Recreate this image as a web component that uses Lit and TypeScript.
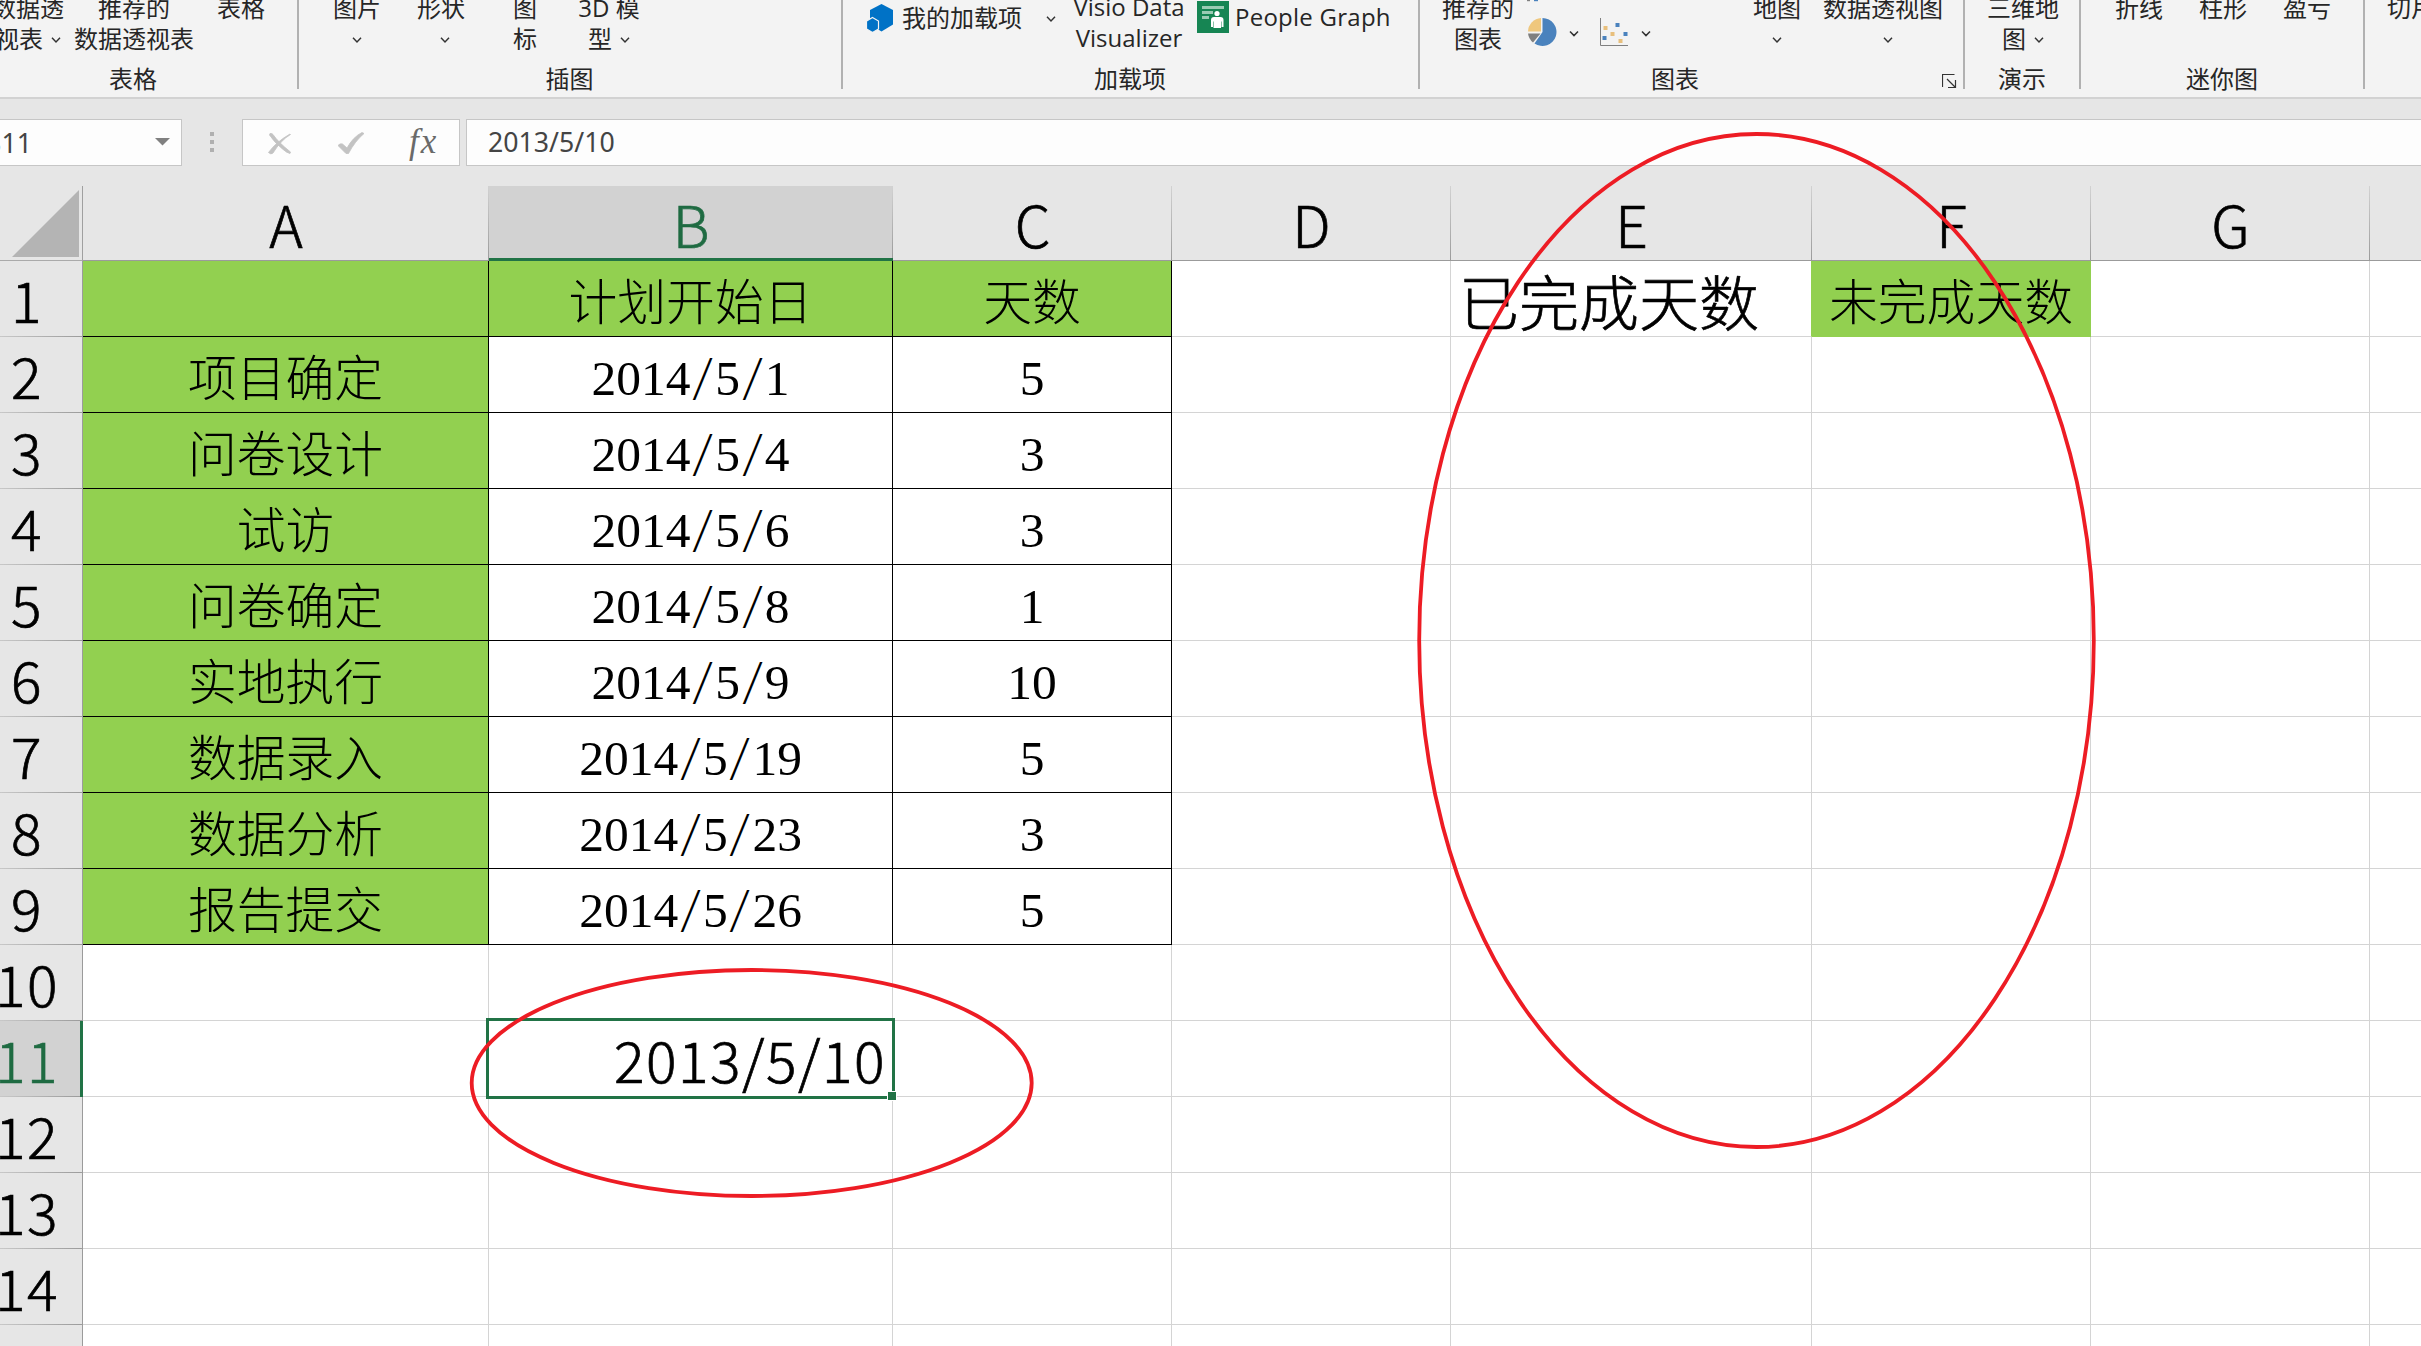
import { LitElement, html, css, svg } from "lit";
import { customElement } from "lit/decorators.js";
import { classMap } from "lit/directives/class-map.js";

const chevron = html`<svg class="chev" width="10" height="6" viewBox="0 0 10 6">
  <path d="M1 .8 5 4.9 9 .8" fill="none" stroke="#333" stroke-width="1.5" />
</svg>`;

@customElement("excel-ribbon")
class ExcelRibbon extends LitElement {
  static styles = css`
    :host { display: block; }
    .ribbon {
      display: flex; height: 97px; overflow: hidden; background: #f3f3f3;
      border-bottom: 2px solid #d2d2d2; color: #262626;
      font: 24px/32px "Open Sans", "Noto Sans CJK SC", sans-serif;
    }
    .group { flex: none; height: 89px; border-right: 2px solid #b1b1b1; box-sizing: border-box; }
    .g1 { width: 299px; } .g2 { width: 544px; } .g3 { width: 577px; }
    .g4 { width: 545px; } .g5 { width: 116px; } .g6 { width: 284px; }
    .g7 { border-right: 0; width: 56px; }
    .tools { display: flex; height: 63px; white-space: nowrap; }
    .tool { flex: none; display: flex; flex-direction: column; align-items: center; margin-top: -8px; }
    .line { display: flex; align-items: center; height: 31px; flex: none; }
    .with .chev { margin-left: 8px; }
    .chev { flex: none; display: block; position: relative; top: 1px; }
    .label { height: 32px; text-align: center; }
    .w52 { width: 52px; } .w56 { width: 56px; } .w58 { width: 58px; }
    .w84 { width: 84px; } .w116 { width: 116px; } .w156 { width: 156px; }
    .l1 { width: 266px; } .l2 { width: 541px; } .l3 { width: 574px; }
    .l4 { width: 534px; margin-left: -12px; } .l5 { width: 114px; } .l6 { width: 282px; }
    .mine { display: flex; height: 32px; margin: 2px 0 0 24px; width: 184px; align-items: center; }
    .mine .t { margin-left: 9px; margin-right: 24px; }
    .addin { flex: none; }
    .visio { width: 118px; margin-left: 19px; margin-top: -9px; }
    .people { display: flex; height: 34px; margin-left: 9px; align-items: center; gap: 6px; letter-spacing: 0.250px; }
    .rec { width: 116px; }
    .charts { display: flex; align-items: flex-start; width: 180px; margin-left: -9px; }
    .maps { width: 72px; margin-left: 34px; }
    .pivot { width: 140px; }
    .pivot .chev { margin-left: 9px; }
    .foot { display: flex; height: 32px; }
    .launch { margin: 11px 0 0 0; }
    .spark { margin-left: 16px; display: flex; }
    .left { align-items: flex-start; margin-left: 22px; }
  `;
  render() {
    return html`<div class="ribbon">
      <div class="group g1">
        <div class="tools">
          <div class="tool w56"><div class="line">数据透</div><div class="line with">视表${chevron}</div></div>
          <div class="tool w156"><div class="line">推荐的</div><div class="line">数据透视表</div></div>
          <div class="tool w58"><div class="line">表格</div></div>
        </div>
        <div class="label l1">表格</div>
      </div>
      <div class="group g2">
        <div class="tools">
          <div class="tool w116"><div class="line">图片</div><div class="line">${chevron}</div></div>
          <div class="tool w52"><div class="line">形状</div><div class="line with">${chevron}</div></div>
          <div class="tool w116"><div class="line">图</div><div class="line">标</div></div>
          <div class="tool w52"><div class="line">3D 模</div><div class="line with">型${chevron}</div></div>
        </div>
        <div class="label l2">插图</div>
      </div>
      <div class="group g3">
        <div class="tools">
          <div class="mine">
            <svg class="addin" width="26" height="28" viewBox="0 0 26 28">
              <path d="M14.500 0 26 6V20.500L14.500 27.500 3 20.500V6Z" fill="#0072c6" />
              <path d="M5.500 13.500 11.500 17V25L5.500 28.500-.5 25V17Z" fill="#0072c6" stroke="#f3f3f3" stroke-width="1.200" />
            </svg>
            <span class="t">我的加载项</span>${chevron}
          </div>
          <div class="tool visio"><div class="line">Visio Data</div><div class="line">Visualizer</div></div>
          <div class="people">
            <svg width="32" height="32" viewBox="0 0 32 32">
              <rect width="32" height="32" fill="#168553" />
              <path d="M5 5H27V8H5ZM5 10H16V13H5ZM5 15H12V18H5Z" fill="#9acbb3" />
              <circle cx="20" cy="12.500" r="2.600" fill="#fff" />
              <path d="M14 26V19Q14 16 17 16H23.500Q26.500 16 26.500 19V26H24.500V20.500H24V27H16.500V20.500H16V26Z" fill="#fff" />
            </svg>
            <span>People Graph</span>
          </div>
        </div>
        <div class="label l3">加载项</div>
      </div>
      <div class="group g4">
        <div class="tools">
          <div class="tool rec"><div class="line">推荐的</div><div class="line">图表</div></div>
          <svg class="charts" width="180" height="50" viewBox="0 0 180 50">
            <rect x="0" y="0" width="3" height="1.200" fill="#808080" /><rect x="7" y="0" width="4" height="1.200" fill="#4a82bd" />
            <path d="M15.500 32V18A14 14 0 1 1 7.500 43.500Z" fill="#4a82bd" />
            <path d="M14 31.500V18A14 14 0 0 0 1 31.500Z" fill="#efc77d" />
            <path d="M13.500 33.500H1A14 14 0 0 0 6 42.500Z" fill="#7f7f7f" />
            <path d="M43 31.500 47 35.600 51 31.500M115 31.500 119 35.600 123 31.500" fill="none" stroke="#333" stroke-width="1.500" />
            <path d="M73.500 18V45.500H101" fill="none" stroke="#7f7f7f" />
            <path d="M76.500 26h4v4h-4ZM83.500 32h4v4h-4ZM91.500 39h4v4h-4Z" fill="#e8bf7c" />
            <path d="M88.500 23h4v4h-4ZM75.500 36h4v4h-4ZM96.500 32h4v4h-4Z" fill="#4a82bd" />
          </svg>
          <div class="tool maps"><div class="line">地图</div><div class="line">${chevron}</div></div>
          <div class="tool pivot"><div class="line">数据透视图</div><div class="line">${chevron}</div></div>
        </div>
        <div class="foot">
          <div class="label l4">图表</div>
          <svg class="launch" width="15" height="15" viewBox="0 0 15 15">
            <path d="M.5 13V.5H12.500M5 5 13 13M13.500 6V13.500H6" fill="none" stroke="#333" stroke-width="1.200" />
          </svg>
        </div>
      </div>
      <div class="group g5">
        <div class="tools"><div class="tool w116"><div class="line">三维地</div><div class="line with">图${chevron}</div></div></div>
        <div class="label l5">演示</div>
      </div>
      <div class="group g6">
        <div class="tools"><div class="spark">
          <div class="tool w84"><div class="line">折线</div></div>
          <div class="tool w84"><div class="line">柱形</div></div>
          <div class="tool w84"><div class="line">盈亏</div></div>
        </div></div>
        <div class="label l6">迷你图</div>
      </div>
      <div class="group g7"><div class="tools"><div class="tool left"><div class="line">切片</div></div></div></div>
    </div>`;
  }
}

@customElement("formula-bar")
class FormulaBar extends LitElement {
  static styles = css`
    :host { display: block; }
    .bar {
      display: flex; height: 47px; padding: 20px 0; background: #e6e6e6; color: #444;
      font: 26.700px/44px "Noto Sans", sans-serif;
    }
    .box { box-sizing: border-box; height: 47px; border: 1px solid #c6c6c6; background: #fdfdfd; display: flex; flex: none; }
    .name { width: 182px; border-left: 0; overflow: hidden; }
    .ref { width: 32px; display: flex; justify-content: flex-end; flex: none; line-height: 45px; }
    .caret { margin: 18px 0 0 123px; }
    .dots { margin: 13px 28px 0 28px; }
    .btns { width: 218px; margin-right: 6px; }
    .value { width: 1955px; border-right: 0; padding-left: 21px; }
    .fx { font: italic 35px/43px "Liberation Serif", serif; color: #6a6a6a; margin-left: 45px; letter-spacing: 2px; }
    .x { margin: 13px 0 0 25px; } .ok { margin: 12px 0 0 46px; }
  `;
  render() {
    return html`<div class="bar">
      <div class="box name"><div class="ref">B11</div>
        <svg class="caret" width="15" height="8"><path d="M0 0H15L7.500 7.500Z" fill="#808080" /></svg></div>
      <svg class="dots" width="4" height="20"><path d="M0 0h4v4H0ZM0 8h4v4H0ZM0 16h4v4H0Z" fill="#b0b0b0" /></svg>
      <div class="box btns">
        <svg class="x" width="24" height="22" viewBox="0 0 24 22"><path d="M2 .5Q4 0 5 1.500Q10 9 22.500 19L22 20.500Q19 20 14.500 16Q6 9 1.500 2ZM22.500 1.500Q13 7 5 20Q3 22 .5 19.500Q8 9 22 1Z" fill="#c3c3c3" stroke="#c3c3c3" stroke-width=".8" /></svg>
        <svg class="ok" width="26" height="22" viewBox="0 0 26 22"><path d="M0 13.500Q2 11 4.500 12L9 16Q15 5 24 .5L26 1.500Q17 9 10.500 21.500H8Z" fill="#c3c3c3" stroke="#c3c3c3" stroke-width=".8" /></svg>
        <span class="fx">fx</span>
      </div>
      <div class="box value">2013/5/10</div>
    </div>`;
  }
}

const COLS = ["A", "B", "C", "D", "E", "F", "G", ""];
const ROWS: string[][] = [
  ["", "计划开始日", "天数", "", "已完成天数", "未完成天数"],
  ["项目确定", "2014/5/1", "5"],
  ["问卷设计", "2014/5/4", "3"],
  ["试访", "2014/5/6", "3"],
  ["问卷确定", "2014/5/8", "1"],
  ["实地执行", "2014/5/9", "10"],
  ["数据录入", "2014/5/19", "5"],
  ["数据分析", "2014/5/23", "3"],
  ["报告提交", "2014/5/26", "5"],
  [],
  ["", "2013/5/10"],
  [], [], [], [],
];

@customElement("sheet-grid")
class SheetGrid extends LitElement {
  static styles = css`
    :host { display: block; }
    .grid {
      display: grid; position: relative; height: 1160px; overflow: hidden; background: #fff; color: #000;
      grid-template-columns: 83px 406px 404px 279px 279px 361px 279px 279px 60px;
      grid-template-rows: 75px; grid-auto-rows: 76px;
      font: 300 57px/75px "Noto Sans CJK SC", sans-serif;
    }
    .grid > div { box-sizing: border-box; display: flex; justify-content: center; white-space: nowrap; min-width: 0; }
    .corner, .col, .row { background: #e6e6e6; }
    .col, .row { -webkit-text-stroke: 0.700px currentColor; }
    .corner { border-bottom: 1px solid #aaa; border-right: 1px solid #a0a0a0; }
    .tri { margin: 4px 0 0 9px; }
    .col {
      border-bottom: 1px solid #9b9b9b;
      background: linear-gradient(#d2d2d2, #9b9b9b) right / 1px 100% no-repeat #e6e6e6;
    }
    .row {
      border-right: 1px solid #9b9b9b; padding-right: 28px; letter-spacing: 1.500px;
      background: linear-gradient(90deg, #c8c8c8, #9b9b9b) bottom / 100% 1px no-repeat #e6e6e6;
    }
    .row span { margin: 0 -30px; }
    .col.on { color: #1f6b42; background-color: #d2d2d2; border-bottom: 3px solid #217346; }
    .row.on { color: #1f6b42; background-color: #d2d2d2; border-right: 3px solid #217346; padding-right: 26px; }
    .cell { border-right: 1px solid #d4d4d4; border-bottom: 1px solid #d4d4d4; }
    .cell.table { border-color: #000; }
    .cell.green { background: #92d050; }
    .cell.free { border-color: #92d050; }
    .cell.pre { border-right-color: #92d050; }
    .cell.song { font-size: 48.800px; line-height: 75px; }
    .cell.num { font: 49.500px/83px "Liberation Serif", serif; }
    .slash { display: inline-block; width: 0.5em; line-height: 1; text-align: center; }
    .stroke {
      display: inline-block; line-height: 1; font-family: "Noto Sans CJK SC", sans-serif; font-weight: 300;
      font-size: 0.880em; transform: translateY(-3px) scaleX(1.200);
    }
    .cell.big { font-size: 60px; line-height: 78px; justify-content: flex-start; padding-left: 8px; -webkit-text-stroke: 0.700px #000; }
    .cell.sel { justify-content: flex-end; padding-right: 6px; letter-spacing: 1.500px; -webkit-text-stroke: 0.700px #000; }
    .select {
      position: absolute; box-sizing: border-box; left: 486px; top: 832px; width: 409px; height: 81px;
      border: 3px solid #217346;
    }
    .handle { position: absolute; right: -5px; bottom: -5px; width: 8px; height: 8px; background: #217346; border: 1px solid #fff; }
  `;
  private num(t: string) {
    return t.split("").map((c) => (c === "/" ? html`<span class="slash"><span class="stroke">/</span></span>` : c));
  }
  private cell(r: number, c: number) {
    const t = ROWS[r][c] ?? "";
    const table = r < 9 && c < 3;
    const free = r === 0 && c === 5;
    const num = table && r > 0 && c > 0;
    const big = r === 0 && c === 4;
    const cls = {
      cell: true, table, free, num, big,
      green: free || (table && (r === 0 || c === 0)),
      song: (table && !num) || free,
      pre: big,
      sel: r === 10 && c === 1,
    };
    return html`<div class=${classMap(cls)}><span>${num ? this.num(t) : t}</span></div>`;
  }
  render() {
    return html`<div class="grid">
      <div class="corner"><svg class="tri" width="67" height="67"><path d="M67 0V67H0Z" fill="#b4b4b4" /></svg></div>
      ${COLS.map((c) => html`<div class=${classMap({ col: true, on: c === "B" })}>${c}</div>`)}
      ${ROWS.map((_, r) => html`
        <div class=${classMap({ row: true, on: r === 10 })}><span>${r + 1}</span></div>
        ${COLS.map((_c, c) => this.cell(r, c))}`)}
      <div class="select"><div class="handle"></div></div>
    </div>`;
  }
}

const MARKS = [
  { cx: 1756.5, cy: 640.5, rx: 337.3, ry: 506.5 },
  { cx: 751.7, cy: 1083, rx: 280, ry: 113 },
];

@customElement("app-root")
class AppRoot extends LitElement {
  static styles = css`
    :host { display: block; position: relative; width: 2421px; height: 1346px; overflow: hidden; background: #e6e6e6; }
    .marks { position: absolute; left: 0; top: 0; }
  `;
  render() {
    return html`
      <excel-ribbon></excel-ribbon>
      <formula-bar></formula-bar>
      <sheet-grid></sheet-grid>
      <svg class="marks" width="2421" height="1346">
        ${MARKS.map((m) => svg`<ellipse cx=${m.cx} cy=${m.cy} rx=${m.rx} ry=${m.ry} fill="none" stroke="#ed1c24" stroke-width="3.800" />`)}
      </svg>`;
  }
}
